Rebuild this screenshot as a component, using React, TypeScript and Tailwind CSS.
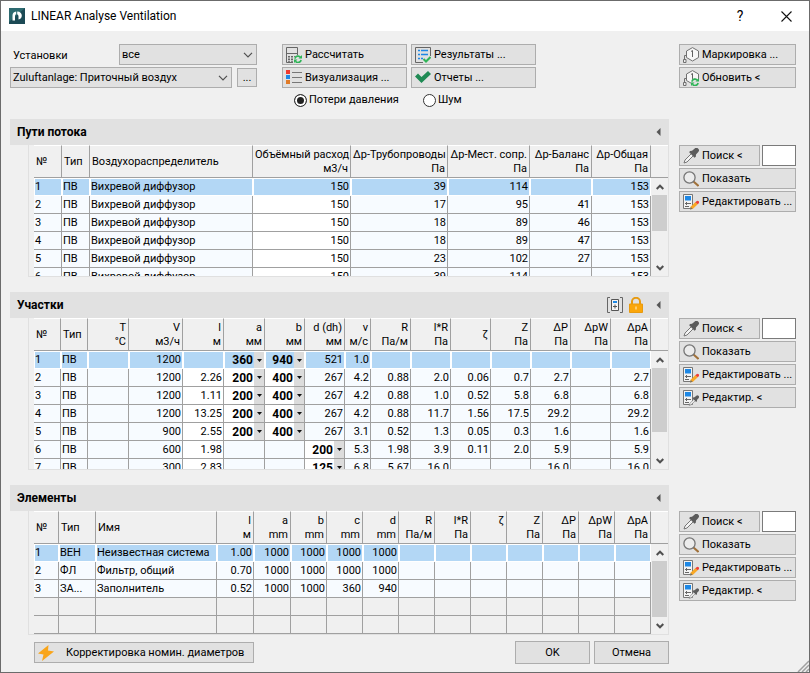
import { useState } from 'react';
import type { ReactNode } from 'react';
import clsx from 'clsx';

type Column = {
  name: string;
  unit?: string;
  width: number;
  left?: boolean;
  editable?: boolean;
};

const flowColumns: Column[] = [
  { name: '№', width: 28, left: true },
  { name: 'Тип', width: 28, left: true },
  { name: 'Воздухораспределитель', width: 163, left: true },
  { name: 'Объёмный расход', unit: 'м3/ч', width: 98, editable: true },
  { name: 'Δр-Трубопроводы', unit: 'Па', width: 97 },
  { name: 'Δр-Мест. сопр.', unit: 'Па', width: 82 },
  { name: 'Δр-Баланс', unit: 'Па', width: 62 },
  { name: 'Δр-Общая', unit: 'Па', width: 59 },
];

const flowRows = [
  ['1', 'ПВ', 'Вихревой диффузор', '150', '39', '114', '', '153'],
  ['2', 'ПВ', 'Вихревой диффузор', '150', '17', '95', '41', '153'],
  ['3', 'ПВ', 'Вихревой диффузор', '150', '18', '89', '46', '153'],
  ['4', 'ПВ', 'Вихревой диффузор', '150', '18', '89', '47', '153'],
  ['5', 'ПВ', 'Вихревой диффузор', '150', '23', '102', '27', '153'],
  ['6', 'ПВ', 'Вихревой диффузор', '150', '39', '114', '', '153'],
];

const ductColumns: Column[] = [
  { name: '№', width: 27, left: true },
  { name: 'Тип', width: 27, left: true },
  { name: 'T', unit: '°C', width: 41 },
  { name: 'V', unit: 'м3/ч', width: 54 },
  { name: 'l', unit: 'м', width: 41, editable: true },
  { name: 'a', unit: 'мм', width: 41 },
  { name: 'b', unit: 'мм', width: 40 },
  { name: 'd (dh)', unit: 'мм', width: 40 },
  { name: 'v', unit: 'м/с', width: 26 },
  { name: 'R', unit: 'Па/м', width: 40 },
  { name: 'l*R', unit: 'Па', width: 40 },
  { name: 'ζ', width: 40 },
  { name: 'Z', unit: 'Па', width: 40 },
  { name: 'ΔP', unit: 'Па', width: 40 },
  { name: 'ΔpW', unit: 'Па', width: 40 },
  { name: 'ΔpA', unit: 'Па', width: 40 },
];

// a leading "=" marks a size that is picked from a list
const ductRows = [
  ['1', 'ПВ', '', '1200', '', '=360', '=940', '521', '1.0', '', '', '', '', '', '', ''],
  ['2', 'ПВ', '', '1200', '2.26', '=200', '=400', '267', '4.2', '0.88', '2.0', '0.06', '0.7', '2.7', '', '2.7'],
  ['3', 'ПВ', '', '1200', '1.11', '=200', '=400', '267', '4.2', '0.88', '1.0', '0.52', '5.8', '6.8', '', '6.8'],
  ['4', 'ПВ', '', '1200', '13.25', '=200', '=400', '267', '4.2', '0.88', '11.7', '1.56', '17.5', '29.2', '', '29.2'],
  ['5', 'ПВ', '', '900', '2.55', '=200', '=400', '267', '3.1', '0.52', '1.3', '0.05', '0.3', '1.6', '', '1.6'],
  ['6', 'ПВ', '', '600', '1.98', '', '', '=200', '5.3', '1.98', '3.9', '0.11', '2.0', '5.9', '', '5.9'],
  ['7', 'ПВ', '', '300', '2.83', '', '', '=125', '6.8', '5.67', '16.0', '', '', '16.0', '', '16.0'],
];

const partColumns: Column[] = [
  { name: '№', width: 25, left: true },
  { name: 'Тип', width: 37, left: true },
  { name: 'Имя', width: 121, left: true },
  { name: 'l', unit: 'м', width: 37 },
  { name: 'a', unit: 'mm', width: 37 },
  { name: 'b', unit: 'mm', width: 36 },
  { name: 'c', unit: 'mm', width: 36 },
  { name: 'd', unit: 'mm', width: 36 },
  { name: 'R', unit: 'Па/м', width: 36 },
  { name: 'l*R', unit: 'Па', width: 36 },
  { name: 'ζ', unit: ' ', width: 36 },
  { name: 'Z', unit: 'Па', width: 36 },
  { name: 'ΔP', unit: 'Па', width: 36 },
  { name: 'ΔpW', unit: 'Па', width: 36 },
  { name: 'ΔpA', unit: 'Па', width: 36 },
];

const partRows = [
  ['1', 'ВЕН', 'Неизвестная система', '1.00', '1000', '1000', '1000', '1000', '', '', '', '', '', '', ''],
  ['2', 'ФЛ', 'Фильтр, общий', '0.70', '1000', '1000', '1000', '1000', '', '', '', '', '', '', ''],
  ['3', 'ЗА...', 'Заполнитель', '0.52', '1000', '1000', '360', '940', '', '', '', '', '', '', ''],
];

/* ---------- icons ---------- */

function Icon({ children }: { children: ReactNode }) {
  return (
    <svg width="16" height="16" viewBox="0 0 16 16" fill="none" className="shrink-0" aria-hidden="true">
      {children}
    </svg>
  );
}

function RefreshMark() {
  return (
    <g stroke="#2fb457" strokeWidth="1.700">
      <circle cx="12" cy="12.300" r="4" fill="#e1e1e1" stroke="none" />
      <path d="M8.900 11.600a3.200 3.200 0 0 1 5.600-1.300" />
      <path d="M15.100 13a3.200 3.200 0 0 1-5.600 1.300" />
      <path d="M16 8v3.500h-3.500z" fill="#2fb457" stroke="none" />
      <path d="M8 16v-3.500h3.500z" fill="#2fb457" stroke="none" />
    </g>
  );
}

function CalcIcon() {
  return (
    <Icon>
      <path d="M.5 15.500V.5h11V8M.5 6.500h11M.5 15.500H7" stroke="#666" />
      <path d="M2 9h2v1.500H2zM5 9h2v1.500H5zM8 9h2v1H8zM2 11.500h2V13H2zM5 11.500h2V13H5zM2 13.700h2v1H2zM5 13.700h2v1H5z" fill="#666" />
      <RefreshMark />
    </Icon>
  );
}

function ResultsIcon() {
  return (
    <Icon>
      <path d="M8 15.500H.5V.5h15V9" stroke="#666" />
      <path d="M3 3.500h2M6 3.500h7M3 7.500h2M6 7.500h7M3 11.500h2M6 11.500h2" stroke="#1e88e5" strokeWidth="1.500" />
      <path d="M8.500 12l2.500 2.500 4.500-4.500" stroke="#2fb457" strokeWidth="2" />
    </Icon>
  );
}

function LegendIcon() {
  return (
    <Icon>
      <path d="M0 0h4v4H0z" fill="#f03a2e" />
      <path d="M0 5h4v4H0z" fill="#1e88e5" />
      <path d="M0 10h4v4H0z" fill="#e07b28" />
      <path d="M6 2.500h10M6 7.500h10M6 12.500h10" stroke="#777" />
    </Icon>
  );
}

function CheckIcon() {
  return (
    <Icon>
      <path d="M0 6.500L3 3.500l3.500 3.500L13 1l3 3L6.500 13z" fill="#1f8a54" />
    </Icon>
  );
}

function MarkIcon({ refresh }: { refresh?: boolean }) {
  return (
    <Icon>
      <path d="M9.500.6l6 3.400v6.500l-6 3.500-6-3.500V4z" fill="#f6f6f6" stroke="#707070" />
      <path d="M8 4.500l1.500-1V10" stroke="#606060" />
      <path d="M3.500 8.500h-2V12" stroke="#707070" />
      <path d="M.5 12.500h2.500v3H.5z" fill="#eee" stroke="#707070" />
      {refresh && <RefreshMark />}
    </Icon>
  );
}

function PipetteShape() {
  return (
    <>
      <path d="M8.500 5.500L2 12l-1 3 3-1 6.500-6.500" fill="#f4f4f4" stroke="#777" />
      <path d="M7 3l2-.3L11.500.7A2.300 2.300 0 0 1 15.300 4L13 6.500l-.2 2.300-1.300 1L6.200 4.300z" fill="#5c5c5c" />
    </>
  );
}

function PipetteIcon() {
  return (
    <Icon>
      <PipetteShape />
    </Icon>
  );
}

function LensIcon() {
  return (
    <Icon>
      <path d="M10.500 10.500l5 4.500" stroke="#a0713a" strokeWidth="2" />
      <circle cx="6.500" cy="6.500" r="5.600" fill="#ececec" stroke="#757575" strokeWidth="1.300" />
    </Icon>
  );
}

function EditIcon({ pick }: { pick?: boolean }) {
  return (
    <Icon>
      <path d="M.5.500h9v14h-9z" fill="#f3f3f3" stroke="#777" />
      <path d="M2 2h6v4.500H2z" fill="#1e88e5" />
      <path d="M2 9.500h6M3.500 8v3M2 12.500h4" stroke="#666" />
      {pick ? (
        <g transform="translate(5.500 5.500) scale(.66)">
          <PipetteShape />
        </g>
      ) : (
        <>
          <path d="M7 15.500l.8-3 4.700-4.500 2.200 2.200-4.700 4.600z" fill="#f9a825" />
          <path d="M7 15.500l.7-2.500 1.800 1.800z" fill="#6d6d6d" />
          <path d="M12.300 8.200l1.200-1a1.500 1.500 0 0 1 2.200 2.100l-1 1z" fill="#ef4038" />
        </>
      )}
    </Icon>
  );
}

function BoltIcon() {
  return (
    <Icon>
      <path d="M10.500 0L0 8.500l5.500 1L4 16 16 6.500l-6-1z" fill="#f9a51a" />
    </Icon>
  );
}

function LockIcon() {
  return (
    <svg width="14" height="16" viewBox="0 0 14 16" fill="none" aria-hidden="true">
      <path d="M3 7V4.500a4 3.700 0 0 1 8 0V7" stroke="#e79a10" strokeWidth="2" />
      <path d="M.5 7h13v8.500H.5z" fill="#fba60a" stroke="#e79a10" />
      <path d="M7 9.500v3" stroke="#fff3d0" />
    </svg>
  );
}

function BracketIcon() {
  return (
    <Icon>
      <path d="M3 .5H.5v15H3M13 .5h2.500v15H13" stroke="#666" />
      <path d="M4.500 2.500h7v11h-7z" fill="#f5f5f5" stroke="#555" />
      <path d="M6 4h4v2H6z" fill="#1e88e5" />
      <path d="M6 9.500h4M8 7.500v4" stroke="#555" />
    </Icon>
  );
}

function Chevron({ up }: { up?: boolean }) {
  return (
    <svg width="8" height="6" viewBox="0 0 8 6" fill="none" aria-hidden="true">
      <path d={up ? 'M.7 5L4 1.700 7.300 5' : 'M.7 1L4 4.300 7.300 1'} stroke="#505050" strokeWidth="2" />
    </svg>
  );
}

/* ---------- controls ---------- */

function ToolButton({ icon, children, className }: { icon: ReactNode; children: ReactNode; className?: string }) {
  return (
    <button
      type="button"
      className={clsx(
        'flex h-[21px] items-center border border-[#adadad] bg-[#e1e1e1] pl-[3px] whitespace-nowrap',
        className ?? 'gap-[3px]',
      )}
    >
      {icon}
      <span>{children}</span>
    </button>
  );
}

function Dropdown({ label, value, className }: { label: string; value: string; className?: string }) {
  return (
    <div className={clsx('relative', className)}>
      <select
        aria-label={label}
        className="block h-[21px] w-full appearance-none border border-[#adadad] bg-[#e1e1e1] pl-[2px] pr-5"
      >
        <option>{value}</option>
      </select>
      <svg
        width="10"
        height="6"
        viewBox="0 0 10 6"
        fill="none"
        className="pointer-events-none absolute right-1 top-2"
        aria-hidden="true"
      >
        <path d="M1 .8l4 4 4-4" stroke="#505050" strokeWidth="1.200" />
      </svg>
    </div>
  );
}

function SizePicker({ label, value, selected }: { label: string; value: string; selected: boolean }) {
  return (
    <div className={clsx('relative flex', selected ? 'h-[16px]' : 'h-[17px]')}>
      <select
        aria-label={label}
        className="block h-full min-w-0 flex-1 appearance-none pr-[11px] text-right text-[12px] leading-[16px] font-bold [text-align-last:right]"
      >
        <option>{value}</option>
      </select>
      <span className="pointer-events-none absolute inset-y-0 right-0 flex w-[10px] items-center justify-center bg-[#dcdcdc]">
        <svg width="5" height="3" viewBox="0 0 5 3" aria-hidden="true">
          <path d="M0 0h5L2.500 3z" fill="#111" />
        </svg>
      </span>
    </div>
  );
}

function ScrollBar({ thumb }: { thumb: string }) {
  return (
    <div className="flex w-[17px] shrink-0 flex-col">
      <div className="h-[33px] border-t border-b border-t-white border-b-[#a0a0a0]" />
      <div className="mx-px flex flex-1 flex-col bg-[#f0f0f0]">
        <button type="button" aria-label="Вверх" className="flex h-[17px] items-center justify-center">
          <Chevron up />
        </button>
        <div className={clsx('bg-[#cdcdcd]', thumb)} />
        <button type="button" aria-label="Вниз" className="mt-auto flex h-[17px] items-center justify-center">
          <Chevron />
        </button>
      </div>
    </div>
  );
}

function Grid({ columns, rows, blank = 0 }: { columns: Column[]; rows: string[][]; blank?: number }) {
  return (
    <table className="w-full table-fixed border-separate border-spacing-0 text-[11px]">
      <colgroup>
        {columns.map((c) => (
          <col key={c.name} style={{ width: c.width }} />
        ))}
      </colgroup>
      <thead>
        <tr>
          {columns.map((c) => (
            <th
              key={c.name}
              className={clsx(
                'h-[33px] border-t border-r border-b border-t-white border-r-[#a0a0a0] border-b-[#a0a0a0] px-[2px] py-0 align-middle leading-[14px] font-normal whitespace-nowrap',
                c.left ? 'text-left' : 'text-right',
              )}
            >
              <div>{c.name}</div>
              {c.unit && <div className="h-[14px]">{c.unit}</div>}
            </th>
          ))}
        </tr>
      </thead>
      <tbody>
        {rows.map((row, i) => (
          <tr key={row[0]}>
            {row.map((cell, j) => {
              const col = columns[j];
              const picker = cell.startsWith('=');
              return (
                <td
                  key={col.name}
                  className={clsx(
                    'h-[18px] overflow-hidden border-r border-b p-0 align-middle leading-[16px] whitespace-nowrap',
                    i === 0 ? 'border-t border-l border-white bg-[#b3d7f5]' : 'border-[#a0a0a0]',
                    i > 0 && (col.editable || picker ? 'bg-white' : 'bg-[#f7fbff]'),
                    !picker && (i === 0 ? 'pr-px' : 'px-px'),
                    col.left ? 'text-left' : 'text-right',
                  )}
                >
                  {picker ? (
                    <SizePicker label={`${col.name} ${row[0]}`} value={cell.slice(1)} selected={i === 0} />
                  ) : (
                    cell
                  )}
                </td>
              );
            })}
          </tr>
        ))}
        {Array.from({ length: blank }, (_, i) => (
          <tr key={`blank-${i}`}>
            {columns.map((c) => (
              <td key={c.name} className="h-[18px] border-r border-b border-[#a0a0a0] p-0" />
            ))}
          </tr>
        ))}
      </tbody>
    </table>
  );
}

type PanelProps = {
  title: string;
  tools?: ReactNode;
  height: string;
  thumb: string;
  pick?: boolean;
  children: ReactNode;
};

function Panel({ title, tools, height, thumb, pick, children }: PanelProps) {
  return (
    <div className="flex gap-[10px]">
      <section className="min-w-0 flex-1">
        <header className="flex h-[26px] items-center gap-[6px] bg-[#e1e1e1] pr-2 pl-[7px]">
          <h2 className="mr-auto text-[12px] font-bold">{title}</h2>
          {tools}
          <button type="button" aria-label="Свернуть" className="ml-[6px] flex w-[6px] justify-center">
            <svg width="5" height="8" viewBox="0 0 5 8" aria-hidden="true">
              <path d="M4.500 0v8L.5 4z" fill="#555" />
            </svg>
          </button>
        </header>
        <div className="ml-[18px] border-r border-b border-l border-[#e0e0e0] pl-[5px]">
          <div className={clsx('flex overflow-hidden', height)}>
            <div className="min-w-0 flex-1">{children}</div>
            <ScrollBar thumb={thumb} />
          </div>
        </div>
      </section>
      <aside className="flex w-[117px] shrink-0 flex-col gap-[2px] pt-[26px]">
        <div className="flex gap-[2px]">
          <ToolButton icon={<PipetteIcon />} className="flex-1 gap-[3px]">
            Поиск &lt;
          </ToolButton>
          <input aria-label={`Поиск: ${title}`} className="h-[21px] w-[34px] border border-[#7a7a7a] bg-white px-1" />
        </div>
        <ToolButton icon={<LensIcon />}>Показать</ToolButton>
        <ToolButton icon={<EditIcon />}>Редактировать ...</ToolButton>
        {pick && <ToolButton icon={<EditIcon pick />}>Редактир. &lt;</ToolButton>}
      </aside>
    </div>
  );
}

export default function App() {
  const [mode, setMode] = useState('pressure');

  const radio = (id: string, label: string) => (
    <label className="flex w-[125px] items-center gap-[2px] pl-3">
      <input
        type="radio"
        name="mode"
        checked={mode === id}
        onChange={() => setMode(id)}
        className="size-[13px] appearance-none rounded-full border border-[#333] bg-white checked:bg-[#222] checked:shadow-[inset_0_0_0_2px_white]"
      />
      {label}
    </label>
  );

  return (
    <div className="relative flex min-h-screen flex-col border border-[#6b6b6b] bg-[#f0f0f0] font-[Roboto,sans-serif] text-[11px] leading-[14px] text-black">
      <header className="flex h-[30px] items-center bg-white pl-2">
        <svg width="16" height="16" viewBox="0 0 16 16" fill="none" aria-hidden="true">
          <path d="M0 0h16v16H0z" fill="#1c4a55" />
          <path d="M0 0h16L0 14z" fill="#2d6a70" />
          <path d="M3.500 12.500V7.500c0-2.300 1.300-3.800 3.700-4v2.700c-.8.300-1.200.8-1.200 1.800v4.500z" fill="#fff" />
          <path d="M8.200 3.500c2.900.1 4.600 1.600 4.600 4 0 2.200-1.300 3.700-3.300 3.900V8.500c0-1-.4-1.800-1.300-2.300z" fill="#fff" />
        </svg>
        <h1 className="ml-[6px] text-[12px]">LINEAR Analyse Ventilation</h1>
        <button type="button" aria-label="Справка" className="ml-auto w-[46px] text-[14px]">
          ?
        </button>
        <button type="button" aria-label="Закрыть" className="flex w-[46px] justify-center">
          <svg width="11" height="11" viewBox="0 0 11 11" fill="none" aria-hidden="true">
            <path d="M.5.500l10 10M10.500.500l-10 10" stroke="#111" strokeWidth="1.100" />
          </svg>
        </button>
      </header>

      <main className="pt-[13px] pr-[13px] pl-[9px]">
        <div className="flex h-[75px] items-start">
          <div className="flex w-[247px] flex-col gap-[2px]">
            <div className="flex items-center">
              <span className="w-[109px] pt-[2px] pl-[3px]">Установки</span>
              <Dropdown label="Установки" value="все" className="flex-1" />
            </div>
            <div className="flex items-center gap-[5px]">
              <Dropdown label="Установка" value="Zuluftanlage: Приточный воздух" className="w-[222px]" />
              <button type="button" className="h-[19px] w-[20px] border border-[#adadad] bg-[#e1e1e1]">
                ...
              </button>
            </div>
          </div>

          <div className="ml-[25px] grid grid-cols-[125px_125px] gap-x-1 gap-y-[2px]">
            <ToolButton icon={<CalcIcon />}>Рассчитать</ToolButton>
            <ToolButton icon={<ResultsIcon />}>Результаты ...</ToolButton>
            <ToolButton icon={<LegendIcon />}>Визуализация ...</ToolButton>
            <ToolButton icon={<CheckIcon />}>Отчеты ...</ToolButton>
            <div className="col-span-2 flex h-[20px] items-center gap-1">
              {radio('pressure', 'Потери давления')}
              {radio('noise', 'Шум')}
            </div>
          </div>

          <div className="ml-auto flex w-[117px] flex-col gap-[2px]">
            <ToolButton icon={<MarkIcon />}>Маркировка ...</ToolButton>
            <ToolButton icon={<MarkIcon refresh />}>Обновить &lt;</ToolButton>
          </div>
        </div>

        <div className="flex flex-col gap-[15px]">
          <Panel title="Пути потока" height="h-[131px]" thumb="h-[36px]">
            <Grid columns={flowColumns} rows={flowRows} />
          </Panel>
          <Panel
            title="Участки"
            height="h-[151px]"
            thumb="h-[64px]"
            pick
            tools={
              <>
                <button type="button" aria-label="Расчёт размеров">
                  <BracketIcon />
                </button>
                <button type="button" aria-label="Заблокировать">
                  <LockIcon />
                </button>
              </>
            }
          >
            <Grid columns={ductColumns} rows={ductRows} />
          </Panel>
          <Panel title="Элементы" height="h-[123px]" thumb="h-[56px]" pick>
            <Grid columns={partColumns} rows={partRows} blank={2} />
          </Panel>
        </div>

        <footer className="mr-[127px] flex items-center gap-1 pt-[6px] pb-2 pl-6">
          <ToolButton icon={<BoltIcon />} className="mr-auto w-[220px] gap-[12px]">
            Корректировка номин. диаметров
          </ToolButton>
          <button type="button" className="h-[23px] w-[75px] border border-[#adadad] bg-[#e1e1e1]">
            OK
          </button>
          <button type="button" className="h-[23px] w-[75px] border border-[#adadad] bg-[#e1e1e1]">
            Отмена
          </button>
        </footer>
      </main>

      <svg width="12" height="12" viewBox="0 0 12 12" className="absolute right-0 bottom-0" aria-hidden="true">
        <path d="M1 12L12 1M5 12l7-7M9 12l3-3" stroke="#a0a0a0" strokeWidth="1.500" />
      </svg>
    </div>
  );
}
